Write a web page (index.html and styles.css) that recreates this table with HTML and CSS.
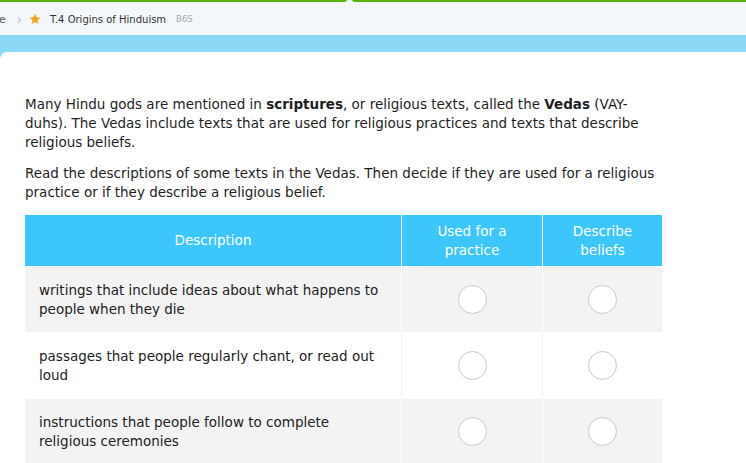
FILE: index.html
```html
<!DOCTYPE html>
<html>
<head>
<meta charset="utf-8">
<link rel="stylesheet" href="styles.css">
</head>
<body>
<div class="topbar">
  <span class="notch"></span>
  <nav class="crumbs">
    <span class="crumb-prev">e</span>
    <span class="chev">›</span>
    <svg class="star" width="12" height="12" viewBox="0 0 24 24"><path d="M12 1.5l3.2 7 7.5.8-5.6 5.1 1.6 7.5L12 18l-6.7 3.9 1.6-7.5L1.3 9.3l7.5-.8z" fill="#f8a51b"/></svg>
    <span class="crumb-title">T.4 Origins of Hinduism</span>
    <span class="crumb-code">B6S</span>
  </nav>
</div>
<div class="band">
  <main class="card">
    <p class="para">Many Hindu gods are mentioned in <b>scriptures</b>, or religious texts, called the <b>Vedas</b> (VAY-duhs). The Vedas include texts that are used for religious practices and texts that describe religious beliefs.</p>
    <p class="para">Read the descriptions of some texts in the Vedas. Then decide if they are used for a religious practice or if they describe a religious belief.</p>
    <table class="grid">
      <thead>
        <tr>
          <th class="col-desc">Description</th>
          <th class="col-a">Used for a<br>practice</th>
          <th class="col-b">Describe<br>beliefs</th>
        </tr>
      </thead>
      <tbody>
        <tr class="shade">
          <td class="desc">writings that include ideas about what happens to people when they die</td>
          <td class="opt"><span class="radio"></span></td>
          <td class="opt"><span class="radio"></span></td>
        </tr>
        <tr class="plain">
          <td class="desc">passages that people regularly chant, or read out loud</td>
          <td class="opt"><span class="radio"></span></td>
          <td class="opt"><span class="radio"></span></td>
        </tr>
        <tr class="shade">
          <td class="desc">instructions that people follow to complete religious ceremonies</td>
          <td class="opt"><span class="radio"></span></td>
          <td class="opt"><span class="radio"></span></td>
        </tr>
      </tbody>
    </table>
  </main>
</div>
</body>
</html>
```
FILE: styles.css
```css
html, body {
  margin: 0;
  padding: 0;
  background: #ffffff;
  overflow: hidden;
}
body {
  font-family: "DejaVu Sans", Verdana, sans-serif;
  color: #222;
}
.topbar {
  position: relative;
  height: 33px;
  border-top: 2px solid #57b30c;
  background: #f3f7fa;
  display: flex;
  align-items: center;
}
.notch {
  position: absolute;
  left: 345px;
  top: -2px;
  width: 9px;
  height: 4px;
  background: #f3f7fa;
  border-radius: 5px 5px 0 0;
}
.crumbs {
  display: flex;
  align-items: center;
  font-size: 10px;
  margin-left: -1px;
  margin-top: 1px;
}
.crumb-prev { color: #555; font-size: 11px; }
.chev {
  color: #b8b8b8;
  margin-left: 11px;
  font-size: 13px;
}
.star {
  display: block;
  margin-left: 7px;
  margin-top: -1px;
}
.crumb-title {
  color: #333;
  margin-left: 9px;
}
.crumb-code {
  color: #a6a6a6;
  font-size: 8.5px;
  margin-left: 10px;
}
.band {
  background: #8bd8f7;
  padding-top: 17px;
}
.card {
  background: #fff;
  border-radius: 7px 0 0 0;
  padding: 43px 84px 20px 25px;
  height: 400px;
}
.para {
  margin: 0 0 12px;
  font-size: 13.5px;
  line-height: 19px;
  color: #1e1e1e;
}
.grid {
  margin-top: 13px;
  width: 637px;
  border-collapse: collapse;
  font-size: 13.5px;
  line-height: 19px;
}
.grid th {
  background: #3dc6fb;
  color: #fff;
  font-weight: normal;
  height: 51px;
  padding: 0;
  border-left: 1px solid #fff;
  border-bottom: 1px solid #fff;
}
.grid th:first-child { border-left: none; }
.col-desc { width: 376px; }
.col-a { width: 140px; }
.col-b { width: 119px; }
.grid td {
  height: 65px;
  padding: 0;
  border-left: 1px solid #fff;
  border-bottom: 1px solid #fff;
}
.grid td:first-child { border-left: none; }
.shade td { background: #f3f3f3; }
.plain td { background: #fff; border-left-color: #efefef; }
.plain td:first-child { border-left: none; }
.desc {
  padding: 0 14px !important;
  color: #222;
}
.opt { text-align: center; vertical-align: middle; }
.radio {
  display: inline-block;
  width: 27px;
  height: 27px;
  border: 1px solid #c9c9c9;
  border-radius: 50%;
  background: #fff;
  vertical-align: middle;
}
```
